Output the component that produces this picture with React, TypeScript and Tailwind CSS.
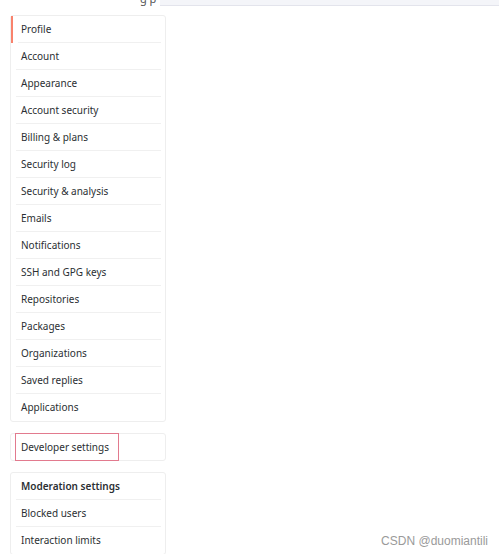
import React from "react";

const main = [
  "Profile",
  "Account",
  "Appearance",
  "Account security",
  "Billing & plans",
  "Security log",
  "Security & analysis",
  "Emails",
  "Notifications",
  "SSH and GPG keys",
  "Repositories",
  "Packages",
  "Organizations",
  "Saved replies",
  "Applications",
];

export default function App() {
  return (
    <div
      className="w-[499px] h-[554px] bg-white relative overflow-hidden text-[#2b2f33]"
      style={{ fontFamily: '"Noto Sans", "Open Sans", sans-serif' }}
    >
      <div className="h-[6px] flex overflow-hidden">
        <div className="w-[140px]" />
        <div className="w-[20px] text-[11px] leading-[11px] mt-[-7px] text-[#555]">g p</div>
        <div className="flex-1 bg-[#f4f5f9] border-b border-[#e3e4ec]" />
      </div>
      <div className="pl-[10px] pt-[9px] w-[166px] flex flex-col">
        <div className="border border-[#eeeeee] rounded-[3px] flex flex-col">
          {main.map((t, i) => (
            <div
              key={t}
              className={`h-[27px] flex items-center text-[10px] relative ${
                i === 0 ? "border-l-2 border-[#f9826c] pl-[8px]" : "pl-[10px]"
              }`}
            >
              <span>{t}</span>
              {i < main.length - 1 && (
                <div className="absolute left-[5px] right-[4px] bottom-0 h-px bg-[#f0f0f0]" />
              )}
            </div>
          ))}
        </div>
        <div className="mt-[11px] border border-[#eeeeee] rounded-[3px] h-[28px] flex items-center relative">
          <div className="absolute left-[4px] top-[-1px] w-[104px] h-[28px] border border-[#e27a8e]" />
          <span className="pl-[10px] text-[10px]">Developer settings</span>
        </div>
        <div className="mt-[11px] border border-[#eeeeee] rounded-[3px] flex flex-col">
          <div className="h-[27px] flex items-center pl-[10px] text-[10px] font-semibold relative">
            Moderation settings
            <div className="absolute left-[5px] right-[4px] bottom-0 h-px bg-[#f0f0f0]" />
          </div>
          <div className="h-[27px] flex items-center pl-[10px] text-[10px] relative">
            Blocked users
            <div className="absolute left-[5px] right-[4px] bottom-0 h-px bg-[#f0f0f0]" />
          </div>
          <div className="h-[27px] flex items-center pl-[10px] text-[10px]">Interaction limits</div>
        </div>
      </div>
      <div
        className="absolute right-[11px] bottom-[4px] text-[12px] text-[#9a9a9a]"
        style={{ fontFamily: '"Liberation Sans", Arial, sans-serif' }}
      >
        CSDN @duomiantili
      </div>
    </div>
  );
}
